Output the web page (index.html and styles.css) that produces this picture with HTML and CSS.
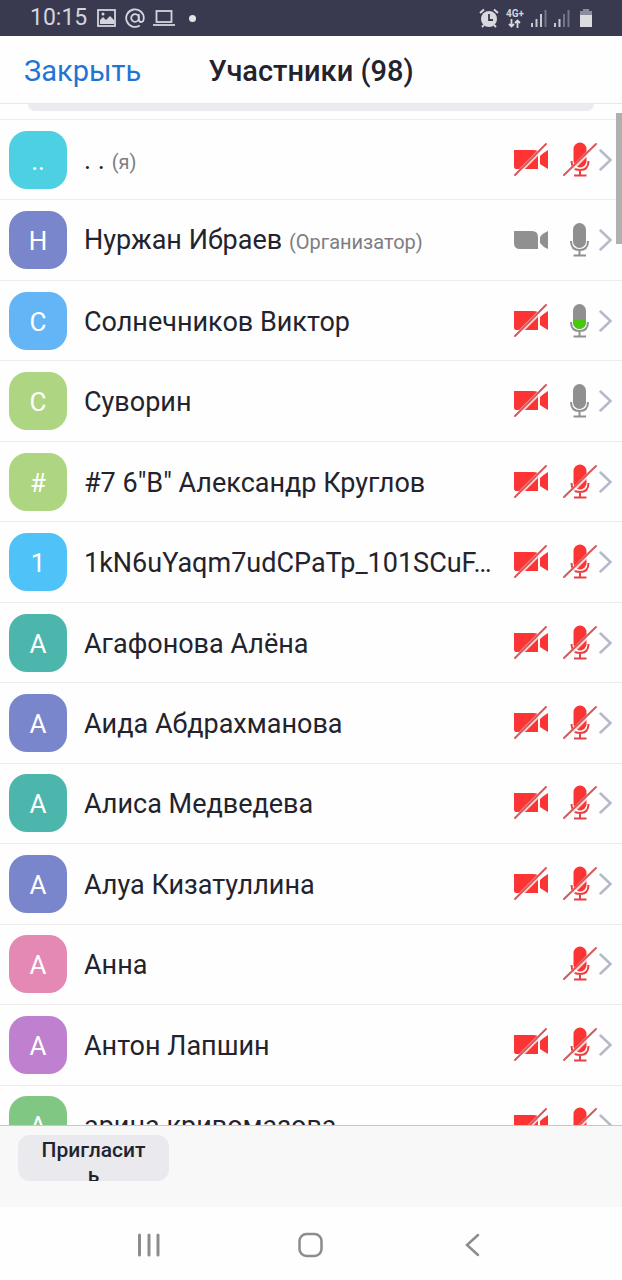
FILE: index.html
```html
<!DOCTYPE html>
<html lang="ru">
<head>
    <meta charset="UTF-8">
    <meta name="viewport" content="width=device-width, initial-scale=1.0">
    <title>Участники</title>
    <link rel="stylesheet" href="styles.css">
</head>
<body>
    <svg class="sprite" aria-hidden="true">
        <symbol id="cam-on" viewBox="0 0 36 36">
            <path fill="#909090" d="M1 9h18q6 0 6 6v12H7q-6 0-6-6zM35 9v18q-5-2-8-6v-6q3-4 8-6z"/>
        </symbol>
        <symbol id="cam-off" viewBox="0 0 36 36">
            <path fill="#fc3434" d="M1 8h19q5 0 5 2v17H3q-2 0-2-3zM35 8v19q-5-3-8-5v-8q3-3 8-6z"/>
            <path stroke="#fff" stroke-opacity="0.800" stroke-width="4" d="M2 34L34 2"/>
            <path stroke="#d8585c" stroke-width="2" stroke-linecap="round" d="M2 33L33 2"/>
        </symbol>
        <symbol id="mic-on" viewBox="0 0 36 36">
            <rect x="11" y="1" width="13" height="25" rx="6.5" fill="#909090"/>
            <path fill="none" stroke="#909090" stroke-width="2" d="M9 19q0 9 8.500 9t8.500-9M17.500 28v5M11.500 33.500h12.500"/>
        </symbol>
        <symbol id="mic-talk" viewBox="0 0 36 36">
            <rect x="11" y="1" width="13" height="25" rx="6.5" fill="#909090"/>
            <path fill="#48c80c" d="M11 17h13v2.500a6.500 6.500 0 0 1-13 0z"/>
            <path fill="none" stroke="#909090" stroke-width="2" d="M9 19q0 9 8.500 9t8.500-9M17.500 28v5M11.500 33.500h12.500"/>
        </symbol>
        <symbol id="mic-off" viewBox="0 0 36 36">
            <rect x="11.500" y="0.500" width="13" height="25" rx="6.500" fill="#fc3434"/>
            <path fill="none" stroke="#e84044" stroke-width="2" d="M9.500 19q0 9 8.500 9t8.500-9M18 28v5M12 33.500h12.500"/>
            <path stroke="#fff" stroke-opacity="0.800" stroke-width="4" d="M3 34L35 2"/>
            <path stroke="#d8585c" stroke-width="2" stroke-linecap="round" d="M2 33L34 2"/>
        </symbol>
        <symbol id="arrow" viewBox="0 0 14 24">
            <path fill="none" stroke="#b6b9c9" stroke-width="2.500" stroke-linecap="round" d="M1.500 2.500L11.500 12L1.500 21.500"/>
        </symbol>
    </svg>

    <div class="status-bar">
        <span class="clock">10:15</span>
        <svg class="s-icon" width="20" height="20" viewBox="0 0 20 20">
            <rect x="1" y="2" width="17" height="16" fill="none" stroke="#d4d4dc" stroke-width="1.800"/>
            <path fill="#d4d4dc" d="M3 16v-4l3-3 3 3 4-4 4 4v4z"/>
            <circle cx="6" cy="6" r="1.500" fill="#d4d4dc"/>
        </svg>
        <svg class="s-icon" width="20" height="20" viewBox="0 0 20 20" fill="none" stroke="#d4d4dc" stroke-width="1.800">
            <circle cx="10" cy="10" r="3.800"/>
            <path d="M13.800 6v5q0 3 2.400 3t2.600-4a8.800 8.800 0 1 0-4 7.500"/>
        </svg>
        <svg class="s-icon" width="22" height="20" viewBox="0 0 22 20" fill="none" stroke="#d4d4dc" stroke-width="1.800">
            <rect x="3.500" y="3" width="15" height="11"/>
            <path d="M0 17h22"/>
        </svg>
        <span class="dot"></span>
        <div class="status-right">
            <svg width="20" height="20" viewBox="0 0 20 20">
                <circle cx="10" cy="11" r="8" fill="#d8d8de"/>
                <path fill="none" stroke="#d8d8de" stroke-width="2" d="M1 5l4-3.500M19 5l-4-3.500M5 17l-2 2M15 17l2 2"/>
                <path fill="none" stroke="#393a50" stroke-width="1.800" d="M10 6v6h4"/>
            </svg>
            <span class="network">4G+
                <svg width="13" height="9" viewBox="0 0 13 9" fill="none" stroke="#d8d8de" stroke-width="1.800">
                    <path d="M3.500 0v7M1 5l2.500 2.500L6 5M9.500 9V1.500M7 4l2.500-2.500L12 4"/>
                </svg>
            </span>
            <svg width="16" height="18" viewBox="0 0 16 18">
                <path fill="#c8c8d0" d="M0 14h2v4H0zM4.500 10h2v8h-2zM9 5h2v13H9z"/>
                <path fill="#74758a" d="M13.500 1h2v17h-2z"/>
            </svg>
            <svg width="16" height="18" viewBox="0 0 16 18">
                <path fill="#c8c8d0" d="M0 14h2v4H0zM4.500 10h2v8h-2z"/>
                <path fill="#74758a" d="M9 5h2v13H9zM13.500 1h2v17h-2z"/>
            </svg>
            <svg class="battery" width="12" height="18" viewBox="0 0 12 18">
                <path fill="#8b8c9c" d="M3 0h6v2h3v5H0V2h3z"/>
                <path fill="#dcdce0" d="M0 6h12v12H0z"/>
            </svg>
        </div>
    </div>

    <header class="header">
        <button class="close" type="button">Закрыть</button>
        <h1>Участники (98)</h1>
    </header>

    <main class="content">
        <div class="search"></div>
        <ul class="list">
            <li>
                <span class="avatar cyan">..</span>
                <span class="name">. . <small>(я)</small></span>
                <svg class="icon"><use href="#cam-off"/></svg>
                <svg class="icon"><use href="#mic-off"/></svg>
                <svg class="arrow"><use href="#arrow"/></svg>
            </li>
            <li>
                <span class="avatar indigo">Н</span>
                <span class="name">Нуржан Ибраев <small>(Организатор)</small></span>
                <svg class="icon"><use href="#cam-on"/></svg>
                <svg class="icon"><use href="#mic-on"/></svg>
                <svg class="arrow"><use href="#arrow"/></svg>
            </li>
            <li>
                <span class="avatar blue">С</span>
                <span class="name">Солнечников Виктор</span>
                <svg class="icon"><use href="#cam-off"/></svg>
                <svg class="icon"><use href="#mic-talk"/></svg>
                <svg class="arrow"><use href="#arrow"/></svg>
            </li>
            <li>
                <span class="avatar lime">С</span>
                <span class="name">Суворин</span>
                <svg class="icon"><use href="#cam-off"/></svg>
                <svg class="icon"><use href="#mic-on"/></svg>
                <svg class="arrow"><use href="#arrow"/></svg>
            </li>
            <li>
                <span class="avatar lime">#</span>
                <span class="name">#7 6"В" Александр Круглов</span>
                <svg class="icon"><use href="#cam-off"/></svg>
                <svg class="icon"><use href="#mic-off"/></svg>
                <svg class="arrow"><use href="#arrow"/></svg>
            </li>
            <li>
                <span class="avatar sky">1</span>
                <span class="name">1kN6uYaqm7udCPaTp_101SCuF…</span>
                <svg class="icon"><use href="#cam-off"/></svg>
                <svg class="icon"><use href="#mic-off"/></svg>
                <svg class="arrow"><use href="#arrow"/></svg>
            </li>
            <li>
                <span class="avatar teal">А</span>
                <span class="name">Агафонова Алёна</span>
                <svg class="icon"><use href="#cam-off"/></svg>
                <svg class="icon"><use href="#mic-off"/></svg>
                <svg class="arrow"><use href="#arrow"/></svg>
            </li>
            <li>
                <span class="avatar indigo">А</span>
                <span class="name">Аида Абдрахманова</span>
                <svg class="icon"><use href="#cam-off"/></svg>
                <svg class="icon"><use href="#mic-off"/></svg>
                <svg class="arrow"><use href="#arrow"/></svg>
            </li>
            <li>
                <span class="avatar teal">А</span>
                <span class="name">Алиса Медведева</span>
                <svg class="icon"><use href="#cam-off"/></svg>
                <svg class="icon"><use href="#mic-off"/></svg>
                <svg class="arrow"><use href="#arrow"/></svg>
            </li>
            <li>
                <span class="avatar indigo">А</span>
                <span class="name">Алуа Кизатуллина</span>
                <svg class="icon"><use href="#cam-off"/></svg>
                <svg class="icon"><use href="#mic-off"/></svg>
                <svg class="arrow"><use href="#arrow"/></svg>
            </li>
            <li>
                <span class="avatar pink">А</span>
                <span class="name">Анна</span>
                <svg class="icon"><use href="#mic-off"/></svg>
                <svg class="arrow"><use href="#arrow"/></svg>
            </li>
            <li>
                <span class="avatar purple">А</span>
                <span class="name">Антон Лапшин</span>
                <svg class="icon"><use href="#cam-off"/></svg>
                <svg class="icon"><use href="#mic-off"/></svg>
                <svg class="arrow"><use href="#arrow"/></svg>
            </li>
            <li>
                <span class="avatar green">А</span>
                <span class="name">арина кривомазова</span>
                <svg class="icon"><use href="#cam-off"/></svg>
                <svg class="icon"><use href="#mic-off"/></svg>
                <svg class="arrow"><use href="#arrow"/></svg>
            </li>
        </ul>
        <div class="scroll-thumb"></div>
    </main>

    <footer class="footer">
        <button class="invite" type="button">Пригласить</button>
    </footer>

    <nav class="nav">
        <button type="button" aria-label="Недавние">
            <svg width="26" height="26" viewBox="0 0 26 26" fill="none" stroke="#8c8c8c" stroke-width="3" stroke-linecap="round">
                <path d="M3.500 3v20M13 3v20M22 3v20"/>
            </svg>
        </button>
        <button type="button" aria-label="Домой">
            <svg width="26" height="26" viewBox="0 0 26 26" fill="none" stroke="#8c8c8c" stroke-width="2.500">
                <rect x="1.500" y="2" width="22" height="22" rx="7"/>
            </svg>
        </button>
        <button type="button" aria-label="Назад">
            <svg width="26" height="26" viewBox="0 0 26 26" fill="none" stroke="#8c8c8c" stroke-width="2.500" stroke-linecap="round">
                <path d="M18 3L7 13L18 23"/>
            </svg>
        </button>
    </nav>
</body>
</html>
```
FILE: styles.css
```css
* {
    box-sizing: border-box;
}
body {
    margin: 0;
    height: 100vh;
    display: flex;
    flex-direction: column;
    overflow: hidden;
    background: #fefefe;
    color: #23232d;
    font-family: Roboto, "Noto Sans", sans-serif;
}
button {
    border: none;
    background: none;
    padding: 0;
    font-family: inherit;
    cursor: pointer;
}
svg {
    flex: none;
}
.sprite {
    position: absolute;
    width: 0;
    height: 0;
}
.status-bar {
    display: flex;
    flex: none;
    align-items: center;
    height: 36px;
    padding: 0 30px;
    background: #393a50;
    color: #d4d4dc;
}
.clock {
    font-size: 23px;
    line-height: 36px;
    margin-right: 10px;
}
.s-icon {
    margin-right: 8px;
}
.dot {
    width: 7px;
    height: 7px;
    margin-left: 6px;
    border-radius: 50%;
    background: #e4e4e8;
}
.status-right {
    display: flex;
    align-items: center;
    gap: 7px;
    margin-left: auto;
}
.network {
    display: flex;
    flex-direction: column;
    align-items: center;
    font-size: 10px;
    line-height: 10px;
    font-weight: 700;
}
.battery {
    margin-left: 3px;
}
.header {
    display: flex;
    flex: none;
    align-items: center;
    justify-content: center;
    position: relative;
    height: 68px;
    padding-top: 2px;
    border-bottom: 1px solid #e8e8e8;
}
.header h1 {
    margin: 0;
    font-size: 29px;
    line-height: 36px;
    font-weight: 500;
}
.close {
    position: absolute;
    left: 24px;
    color: #1f74d6;
    font-size: 29px;
    line-height: 36px;
}
.content {
    display: flex;
    flex: 1;
    flex-direction: column;
    min-height: 0;
    position: relative;
    overflow: hidden;
}
.search {
    flex: none;
    height: 7px;
    margin: 0 28px 8px;
    border-radius: 0 0 10px 10px;
    background: #ebebf0;
}
/* twelve and a half rows fit the screen */
.list {
    display: grid;
    flex: 1;
    grid-auto-rows: 8%;
    min-height: 0;
    margin: 0;
    padding: 0;
    list-style: none;
}
.list li {
    display: flex;
    align-items: center;
    padding: 0 9px;
    border-top: 1px solid #ececec;
}
.avatar {
    flex: none;
    width: 58px;
    height: 58px;
    margin-right: 17px;
    border-radius: 18px;
    color: #fff;
    font-size: 26px;
    line-height: 60px;
    text-align: center;
}
.cyan { background: #4dd0e1; }
.indigo { background: #7986cb; }
.blue { background: #64b5f6; }
.lime { background: #aed581; }
.sky { background: #4fc3f7; }
.teal { background: #4db6ac; }
.pink { background: #e488b4; }
.purple { background: #bf80d0; }
.green { background: #81c784; }
.name {
    flex: 1;
    min-width: 0;
    padding-top: 2px;
    overflow: hidden;
    font-size: 27px;
    line-height: 36px;
    white-space: nowrap;
    text-overflow: ellipsis;
}
.name small {
    color: #7d7d82;
    font-size: 20px;
}
.icon {
    width: 36px;
    height: 36px;
    margin-left: 13px;
}
.arrow {
    width: 14px;
    height: 24px;
    margin-left: 1px;
}
.scroll-thumb {
    position: absolute;
    top: 9px;
    right: 0;
    width: 6px;
    height: 131px;
    background: #b0b0b0;
}
.footer {
    flex: none;
    height: 82px;
    padding: 9px 18px;
    border-top: 1px solid #c8c8cc;
    background: #f8f8f8;
}
.invite {
    display: block;
    width: 151px;
    height: 46px;
    padding: 3px 20px;
    overflow: hidden;
    border-radius: 12px;
    background: #e9e9ee;
    color: #23232d;
    font-size: 21px;
    line-height: 25px;
    font-weight: 500;
    word-break: break-all;
}
.nav {
    display: flex;
    flex: none;
    align-items: center;
    justify-content: center;
    gap: 136px;
    height: 73px;
    padding-top: 2px;
}
.nav button {
    display: flex;
}
```
